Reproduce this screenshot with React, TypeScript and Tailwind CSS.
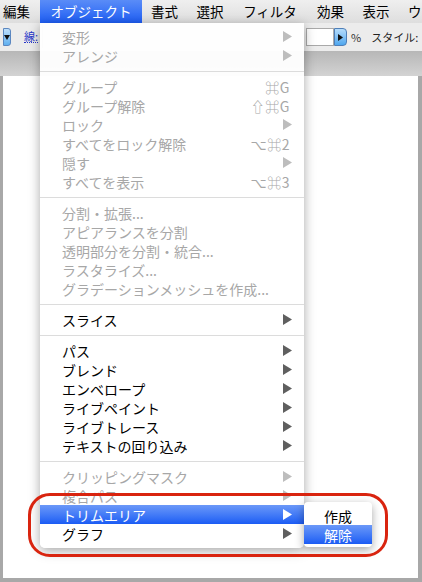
import React from "react";

type Item =
  | { kind: "sep" }
  | {
      kind: "item";
      label: string;
      disabled?: boolean;
      sub?: boolean;
      shortcut?: string;
      active?: boolean;
    };

const items: Item[] = [
  { kind: "item", label: "変形", disabled: true, sub: true },
  { kind: "item", label: "アレンジ", disabled: true, sub: true },
  { kind: "sep" },
  { kind: "item", label: "グループ", disabled: true, shortcut: "⌘G" },
  { kind: "item", label: "グループ解除", disabled: true, shortcut: "⇧⌘G" },
  { kind: "item", label: "ロック", disabled: true, sub: true },
  { kind: "item", label: "すべてをロック解除", disabled: true, shortcut: "⌥⌘2" },
  { kind: "item", label: "隠す", disabled: true, sub: true },
  { kind: "item", label: "すべてを表示", disabled: true, shortcut: "⌥⌘3" },
  { kind: "sep" },
  { kind: "item", label: "分割・拡張...", disabled: true },
  { kind: "item", label: "アピアランスを分割", disabled: true },
  { kind: "item", label: "透明部分を分割・統合...", disabled: true },
  { kind: "item", label: "ラスタライズ...", disabled: true },
  { kind: "item", label: "グラデーションメッシュを作成...", disabled: true },
  { kind: "sep" },
  { kind: "item", label: "スライス", sub: true },
  { kind: "sep" },
  { kind: "item", label: "パス", sub: true },
  { kind: "item", label: "ブレンド", sub: true },
  { kind: "item", label: "エンベロープ", sub: true },
  { kind: "item", label: "ライブペイント", sub: true },
  { kind: "item", label: "ライブトレース", sub: true },
  { kind: "item", label: "テキストの回り込み", sub: true },
  { kind: "sep" },
  { kind: "item", label: "クリッピングマスク", disabled: true, sub: true },
  { kind: "item", label: "複合パス", disabled: true, sub: true },
  { kind: "item", label: "トリムエリア", sub: true, active: true },
  { kind: "item", label: "グラフ", sub: true },
];

const menuBar = [
  { label: "編集", w: "w-[40px]", align: "justify-start pl-[3px]" },
  { label: "オブジェクト", w: "w-[102px]", align: "justify-center", active: true },
  { label: "書式", w: "w-[45px]", align: "justify-center" },
  { label: "選択", w: "w-[46px]", align: "justify-center" },
  { label: "フィルタ", w: "w-[74px]", align: "justify-center" },
  { label: "効果", w: "w-[47px]", align: "justify-center" },
  { label: "表示", w: "w-[44px]", align: "justify-center" },
  { label: "ウ", w: "w-[30px]", align: "justify-start pl-[10px]" },
];

function Arrow({ color }: { color: string }) {
  return (
    <svg width="9" height="11" viewBox="0 0 9 11" className="shrink-0">
      <polygon points="0,0 9,5.5 0,11" fill={color} />
    </svg>
  );
}

function MenuRow({ item }: { item: Extract<Item, { kind: "item" }> }) {
  const text = item.active
    ? "text-white"
    : item.disabled
      ? "text-[#a7a7a7]"
      : "text-black";
  const arrow = item.active ? "#ffffff" : item.disabled ? "#bdbdbd" : "#5f5f5f";
  return (
    <div
      className={`flex h-[19px] items-center pl-[22px] pr-[12px] ${text} ${
        item.active ? "bg-gradient-to-b from-[#6b98f8] to-[#1a5bf4]" : ""
      }`}
    >
      <span className="flex-1 whitespace-nowrap">{item.label}</span>
      {item.shortcut && (
        <span className="pr-[2px] text-[14px] tracking-[0.5px]">{item.shortcut}</span>
      )}
      {item.sub && <Arrow color={arrow} />}
    </div>
  );
}

export default function App() {
  return (
    <div className="relative flex h-[582px] w-[422px] flex-col overflow-hidden bg-[#a8a8a8] font-['Noto_Sans_CJK_JP','DejaVu_Sans',sans-serif] text-[14px] leading-none">
      {/* menu bar */}
      <div className="flex h-[23px] shrink-0 bg-gradient-to-b from-[#efefef] to-[#dedede] text-[13.5px] text-black">
        {menuBar.map((m) => (
          <div
            key={m.label}
            className={`flex h-full shrink-0 items-center ${m.w} ${m.align} ${
              m.active ? "bg-gradient-to-b from-[#5a8cf7] to-[#1c5cf4] text-white" : ""
            }`}
          >
            {m.label}
          </div>
        ))}
      </div>

      {/* control bar */}
      <div className="flex h-[28px] shrink-0 items-center whitespace-nowrap bg-[#ececec] pl-[3px] text-[11px]">
        <div className="flex h-[18px] w-[8px] shrink-0 items-center justify-center rounded-r-[3px] border border-[#5b87c0] bg-gradient-to-b from-[#bfe0fb] to-[#5fb0ef]">
          <svg width="6" height="5" viewBox="0 0 6 5">
            <polygon points="0,0 6,0 3,5" fill="#111" />
          </svg>
        </div>
        <span className="ml-[13px] shrink-0 border-b border-dotted border-[#2838c8] text-[#2838c8]">線:</span>
        <div className="ml-[4px] h-[22px] w-px shrink-0 bg-[#b8b8b8]" />
        <div className="ml-[263px] h-[18px] w-[28px] shrink-0 border border-[#a9a9a9] bg-white" />
        <div className="flex h-[18px] w-[13px] shrink-0 items-center justify-center rounded-r-[4px] border border-[#4f7fb8] bg-gradient-to-b from-[#b5dcfb] to-[#4ea7ee]">
          <svg width="5" height="7" viewBox="0 0 5 7">
            <polygon points="0,0 5,3.5 0,7" fill="#111" />
          </svg>
        </div>
        <span className="ml-[4px] shrink-0 text-[#333]">%</span>
        <span className="ml-[10px] shrink-0 text-[#222]">スタイル:</span>
        <div className="ml-[4px] h-[18px] w-[14px] shrink-0 border border-[#a9a9a9] bg-white" />
      </div>

      {/* tab band */}
      <div className="h-[25px] shrink-0 bg-gradient-to-b from-[#b7b7b7] to-[#d3d3d3]" />

      {/* canvas */}
      <div className="mb-[4px] ml-[3px] mr-[4px] flex-1 bg-white" />

      {/* object menu */}
      <div className="absolute left-[40px] top-[23px] w-[264px] rounded-b-[5px] bg-white/95 pb-[5px] pt-[4px] shadow-[0_3px_12px_rgba(0,0,0,0.35)]">
        {items.map((it, i) =>
          it.kind === "sep" ? (
            <div key={i} className="flex h-[12px] items-center">
              <div className="h-px w-full bg-[#dcdcdc]" />
            </div>
          ) : (
            <MenuRow key={i} item={it} />
          ),
        )}
      </div>

      {/* submenu */}
      <div className="absolute left-[304px] top-[502px] w-[68px] rounded-[4px] bg-white pb-[3px] pt-[4px] shadow-[0_3px_10px_rgba(0,0,0,0.35)]">
        <div className="flex h-[19px] items-center justify-center text-black">作成</div>
        <div className="flex h-[19px] items-center justify-center bg-gradient-to-b from-[#6b98f8] to-[#1a5bf4] text-white">
          解除
        </div>
      </div>

      {/* annotation */}
      <div className="pointer-events-none absolute left-[28px] top-[493px] h-[64px] w-[360px] rounded-[22px] border-[3px] border-[#d9240f]" />
    </div>
  );
}
